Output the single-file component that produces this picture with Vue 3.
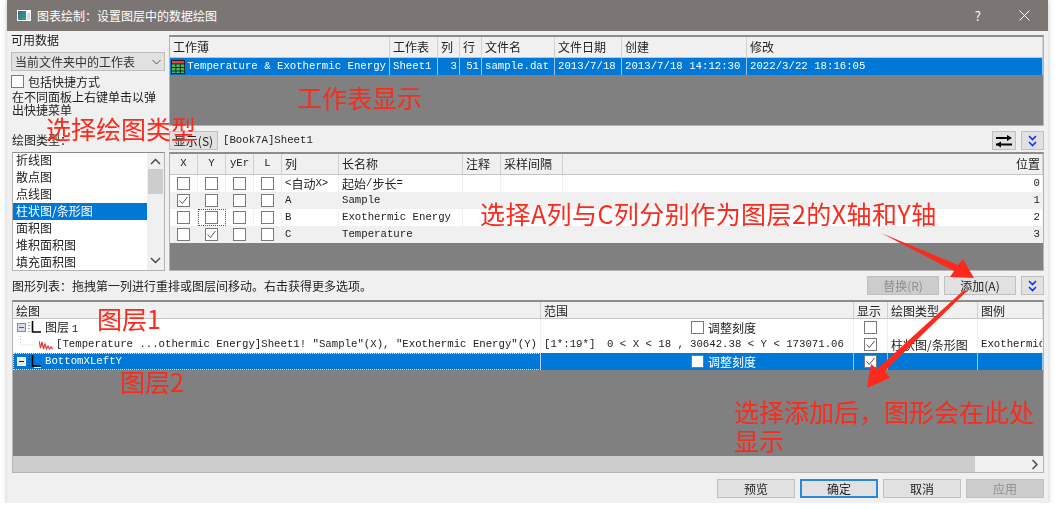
<script setup>
const sheetCols = ["工作薄", "工作表", "列", "行", "文件名", "文件日期", "创建", "修改"];
const plotTypes = ["折线图", "散点图", "点线图", "柱状图/条形图", "面积图", "堆积面积图", "填充面积图"];
const colHeads = ["X", "Y", "yEr", "L", "列", "长名称", "注释", "采样间隔"];
const colRows = [
  { x: false, y: false, name: "", long: "", pos: 0 },
  { x: true, y: false, name: "A", long: "Sample", pos: 1 },
  { x: false, y: false, name: "B", long: "Exothermic Energy", pos: 2, focus: true },
  { x: false, y: true, name: "C", long: "Temperature", pos: 3 },
];
const plotHeads = ["绘图", "范围", "显示", "绘图类型", "图例"];
</script>

<template>
  <div class="dialog">
    <header class="titlebar">
      <svg class="app-icon" width="14" height="11" viewBox="0 0 14 11">
        <defs>
          <linearGradient id="appFill" x1="0" y1="0" x2="1" y2="1">
            <stop offset="0" stop-color="#2f6f8f" />
            <stop offset="1" stop-color="#3f9f80" />
          </linearGradient>
        </defs>
        <rect width="14" height="11" fill="#fff" />
        <rect x="1" y="1" width="8" height="9" fill="url(#appFill)" />
        <rect x="10" y="3" width="3" height="7" fill="#d8dde0" />
      </svg>
      <span class="title">图表绘制：设置图层中的数据绘图</span>
      <span class="help">?</span>
      <svg class="close" width="11" height="11" viewBox="0 0 11 11">
        <path d="M0.5 0.5 10.5 10.5M10.5 0.5 0.5 10.5" stroke="#fff" stroke-width="1" fill="none" />
      </svg>
    </header>

    <div class="body">
      <div class="upper">
        <div class="left">
          <div class="label first">可用数据</div>
          <div class="select">
            <span>当前文件夹中的工作表</span>
            <svg width="9" height="6" viewBox="0 0 9 6"><path d="M0.5 1 4.5 5 8.5 1" stroke="#555" fill="none" /></svg>
          </div>
          <label class="shortcut"><span class="cb"></span>包括快捷方式</label>
          <div class="note">在不同面板上右键单击以弹出快捷菜单</div>
          <div class="label types">绘图类型：</div>
          <div class="listbox">
            <ul>
              <li v-for="(t, i) in plotTypes" :key="t" :class="{ sel: i === 3 }">{{ t }}</li>
            </ul>
            <div class="vscroll">
              <svg width="11" height="7" viewBox="0 0 11 7"><path d="M1 6 5.5 1.5 10 6" stroke="#444" stroke-width="1.4" fill="none" /></svg>
              <div class="vthumb"></div>
              <svg class="down" width="11" height="7" viewBox="0 0 11 7"><path d="M1 1 5.5 5.5 10 1" stroke="#444" stroke-width="1.4" fill="none" /></svg>
            </div>
          </div>
        </div>

        <div class="right">
          <div class="table sheets">
            <div class="row head sheet-grid">
              <div v-for="c in sheetCols" :key="c" class="cell">{{ c }}</div>
            </div>
            <div class="row sel sheet-grid">
              <div class="cell m book">
                <svg width="16" height="16" viewBox="0 0 16 16">
                  <rect width="16" height="16" fill="#111" />
                  <rect x="1" y="1" width="14" height="3" fill="#e8404a" />
                  <g fill="#3fbf5f">
                    <rect x="1" y="5" width="4" height="3" /><rect x="6" y="5" width="4" height="3" /><rect x="11" y="5" width="4" height="3" />
                    <rect x="1" y="9" width="4" height="3" /><rect x="6" y="9" width="4" height="3" /><rect x="11" y="9" width="4" height="3" />
                    <rect x="1" y="13" width="4" height="2" /><rect x="6" y="13" width="4" height="2" /><rect x="11" y="13" width="4" height="2" />
                  </g>
                </svg>
                <span>Temperature &amp; Exothermic Energy</span>
              </div>
              <div class="cell m">Sheet1</div>
              <div class="cell m end">3</div>
              <div class="cell m end">51</div>
              <div class="cell m">sample.dat</div>
              <div class="cell m">2013/7/18</div>
              <div class="cell m">2013/7/18 14:12:30</div>
              <div class="cell m">2022/3/22 18:16:05</div>
            </div>
          </div>

          <div class="toolbar">
            <button class="btn show">显示(S)</button>
            <span class="m path">[Book7A]Sheet1</span>
            <button class="btn icon swap">
              <svg width="16" height="14" viewBox="0 0 16 14">
                <path d="M0 4H12M0 10.5H4" stroke="#000" stroke-width="2" fill="none" />
                <path d="M4 10.5H16" stroke="#000" stroke-width="2" fill="none" />
                <path d="M16 4 11 1V7ZM0 10.5 5 7.5V13.5Z" fill="#000" />
              </svg>
            </button>
            <button class="btn icon">
              <svg width="9" height="12" viewBox="0 0 9 12">
                <path d="M1 1 4.5 4.5 8 1M1 7 4.5 10.5 8 7" stroke="#1a2cff" stroke-width="1.6" fill="none" />
              </svg>
            </button>
          </div>

          <div class="table columns">
            <div class="row head col-grid">
              <div v-for="(c, i) in colHeads" :key="c" class="cell" :class="{ mid: i < 4, m: i < 4 }">{{ c }}</div>
              <div class="cell end">位置</div>
            </div>
            <div v-for="(r, i) in colRows" :key="r.pos" class="row col-grid" :class="{ alt: i % 2 }">
              <div class="cell mid"><span class="cb" :class="{ on: r.x }"><svg v-if="r.x" width="11" height="11" viewBox="0 0 11 11"><path d="M1.5 5.5 4.3 8.5 9.5 2" stroke="#555" fill="none" /></svg></span></div>
              <div class="cell mid" :class="{ focus: r.focus }"><span class="cb" :class="{ on: r.y }"><svg v-if="r.y" width="11" height="11" viewBox="0 0 11 11"><path d="M1.5 5.5 4.3 8.5 9.5 2" stroke="#555" fill="none" /></svg></span></div>
              <div class="cell mid"><span class="cb"></span></div>
              <div class="cell mid"><span class="cb"></span></div>
              <template v-if="i === 0">
                <div class="cell"><span class="m">&lt;</span>自动<span class="m">X&gt;</span></div>
                <div class="cell">起始<span class="m">/</span>步长<span class="m">=</span></div>
              </template>
              <template v-else>
                <div class="cell m">{{ r.name }}</div>
                <div class="cell m">{{ r.long }}</div>
              </template>
              <div class="cell"></div>
              <div class="cell"></div>
              <div class="cell m end">{{ r.pos }}</div>
            </div>
          </div>
        </div>
      </div>

      <div class="hint">
        <span class="hint-text">图形列表：拖拽第一列进行重排或图层间移动。右击获得更多选项。</span>
        <button class="btn wide disabled">替换(R)</button>
        <button class="btn wide">添加(A)</button>
        <button class="btn icon">
          <svg width="9" height="12" viewBox="0 0 9 12">
            <path d="M1 1 4.5 4.5 8 1M1 7 4.5 10.5 8 7" stroke="#1a2cff" stroke-width="1.6" fill="none" />
          </svg>
        </button>
      </div>

      <div class="table plots">
        <div class="row head plot-grid">
          <div v-for="h in plotHeads" :key="h" class="cell">{{ h }}</div>
        </div>

        <div class="row plot-grid">
          <div class="cell tree">
            <span class="expander"></span>
            <svg class="layer" width="14" height="13" viewBox="0 0 14 13">
              <path d="M1 1V11" stroke="#555" stroke-dasharray="1 2" fill="none" />
              <path d="M4.5 0V11H13" stroke="#000" stroke-width="1.6" fill="none" />
            </svg>
            <span>图层 <span class="m">1</span></span>
          </div>
          <div class="cell scale"><span class="cb"></span>调整刻度</div>
          <div class="cell mid"><span class="cb"></span></div>
          <div class="cell"></div>
          <div class="cell"></div>
        </div>

        <div class="row plot-grid">
          <div class="cell tree child">
            <svg class="branch" width="14" height="17" viewBox="0 0 14 17">
              <path d="M0.5 0V9H14" stroke="#bbb" stroke-dasharray="1 2" fill="none" />
            </svg>
            <svg class="spark" width="14" height="10" viewBox="0 0 14 10">
              <path d="M0 1 1.5 8 3 2 4.5 9 6 4 7.5 9 9 6 10.5 9 12 7 14 9" stroke="#e8382e" stroke-width="1.2" fill="none" />
            </svg>
            <span class="m clip">[Temperature ...othermic Energy]Sheet1! "Sample"(X), "Exothermic Energy"(Y)</span>
          </div>
          <div class="cell m range">
            <span class="r1">[1*:19*]</span>
            <span class="r2">0 &lt; X &lt; 18 ,</span>
            <span>30642.38 &lt; Y &lt; 173071.06</span>
          </div>
          <div class="cell mid"><span class="cb on"><svg width="11" height="11" viewBox="0 0 11 11"><path d="M1.5 5.5 4.3 8.5 9.5 2" stroke="#555" fill="none" /></svg></span></div>
          <div class="cell">柱状图/条形图</div>
          <div class="cell m clip">Exothermic Energy</div>
        </div>

        <div class="row sel plot-grid">
          <div class="cell tree dotted">
            <span class="expander"></span>
            <svg class="layer" width="14" height="13" viewBox="0 0 14 13">
              <path d="M1 1V11" stroke="#222" stroke-dasharray="1 2" fill="none" />
              <path d="M4.5 0V11H13" stroke="#000" stroke-width="1.6" fill="none" />
              <path d="M6 12.5H13" stroke="#fff" fill="none" />
            </svg>
            <span class="m">BottomXLeftY</span>
          </div>
          <div class="cell scale"><span class="cb"></span>调整刻度</div>
          <div class="cell mid"><span class="cb on"><svg width="11" height="11" viewBox="0 0 11 11"><path d="M1.5 5.5 4.3 8.5 9.5 2" stroke="#555" fill="none" /></svg></span></div>
          <div class="cell"></div>
          <div class="cell"></div>
        </div>

        <div class="gray"></div>
        <div class="hscroll">
          <div class="hthumb"></div>
          <svg width="7" height="11" viewBox="0 0 7 11"><path d="M1.5 1 6 5.5 1.5 10" stroke="#444" stroke-width="1.4" fill="none" /></svg>
        </div>
      </div>

      <footer class="footer">
        <button class="btn foot">预览</button>
        <button class="btn foot primary">确定</button>
        <button class="btn foot">取消</button>
        <button class="btn foot disabled">应用</button>
      </footer>
    </div>
  </div>

  <!-- red notes drawn over the screenshot -->
  <div class="note-red n1">工作表显示</div>
  <div class="note-red n2">选择绘图类型</div>
  <div class="note-red n3">选择A列与C列分别作为图层2的X轴和Y轴</div>
  <div class="note-red n4">图层1</div>
  <div class="note-red n5">图层2</div>
  <div class="note-red n6">选择添加后，图形会在此处显示</div>
  <svg class="arrows" width="1055" height="509" viewBox="0 0 1055 509">
    <path d="M881 233 958 265 963 259 974 278 950 277 954 271Z" fill="#fb2a1c" />
    <path d="M967 291 885 371 890 378 867 388 871 364 877 369 964 290Z" fill="#fb2a1c" />
  </svg>
</template>

<style>
html,
body {
  margin: 0;
  background: #fff;
  overflow: hidden;
}
</style>

<style scoped>
.dialog {
  width: 1041px;
  height: 503px;
  margin-left: 7px;
  background: #f0f0f0;
  box-shadow: 0 1px 5px rgba(0, 0, 0, 0.25);
  font: 12px/17px "Noto Sans CJK SC", sans-serif;
  color: #222;
  display: flex;
  flex-direction: column;
  filter: blur(0.35px);
}

.titlebar {
  height: 31px;
  flex: none;
  background: #7b7574;
  color: #fff;
  display: flex;
  align-items: center;
  padding: 0 18px 0 10px;
}

.title {
  margin-left: 6px;
  flex: 1;
}

.help {
  font-size: 13px;
  margin-right: 38px;
}

.body {
  padding: 4px 4px 0;
  flex: 1;
  min-height: 0;
}

.upper {
  display: grid;
  grid-template-columns: 154px 875px;
  gap: 4px;
  height: 236px;
}

.left {
  display: flex;
  flex-direction: column;
  min-width: 0;
}

.first {
  line-height: 14px;
  margin-top: -2px;
}

.select {
  height: 19px;
  margin-top: 5px;
  background: #e1e1e1;
  border: 1px solid #bdbdbd;
  box-sizing: border-box;
  display: flex;
  align-items: center;
  justify-content: space-between;
  padding: 0 3px;
  color: #333;
}

.shortcut {
  display: flex;
  align-items: center;
  gap: 4px;
  margin-top: 3px;
  height: 14px;
}

.note {
  margin-top: 2px;
  padding-left: 1px;
  line-height: 13px;
  width: 150px;
}

.types {
  margin-top: auto;
  margin-bottom: 5px;
  padding-left: 1px;
  line-height: 14px;
}

.listbox {
  height: 119px;
  flex: none;
  margin-left: 1px;
  box-sizing: border-box;
  border: 1px solid #b4b4b4;
  border-top-color: #8c8c8c;
  background: #fff;
  display: flex;
  overflow: hidden;
}

.listbox ul {
  list-style: none;
  margin: -1px 0 0;
  padding: 0;
  flex: 1;
  min-width: 0;
}

.listbox li {
  height: 17px;
  padding-left: 3px;
  line-height: 16px;
}

.listbox li.sel {
  background: #0078d7;
  color: #fff;
}

.vscroll {
  width: 17px;
  background: #f0f0f0;
  display: flex;
  flex-direction: column;
  align-items: center;
  padding-top: 5px;
}

.vthumb {
  width: 15px;
  height: 25px;
  margin-top: 4px;
  background: #cdcdcd;
}

.down {
  margin-top: auto;
  margin-bottom: 6px;
}

.right {
  display: flex;
  flex-direction: column;
  min-width: 0;
}

.table {
  box-sizing: border-box;
  border: 1px solid #b4b4b4;
  border-top: 2px solid #8c8c8c;
  background: #808080;
  overflow: hidden;
}

.sheets {
  height: 91px;
}

.columns {
  height: 119px;
  margin-top: 2px;
}

.plots {
  height: 173px;
  margin: 5px 0 0 1px;
  display: flex;
  flex-direction: column;
}

.row {
  display: grid;
  height: 17px;
  background: #fff;
  flex: none;
}

.row.alt {
  background: #f0f0f0;
}

.row.head {
  height: 20px;
  background: #f0f0f0;
  border-bottom: 1px solid #c4c4c4;
}

.row.head .cell {
  padding-bottom: 2px;
}

.plots .row.head {
  height: 16px;
}

.plots .row.head .cell {
  padding-bottom: 0;
}

.row.sel {
  background: #0078d7;
  color: #fff;
}

.sheet-grid {
  grid-template-columns: 220px 48px 22px 22px 73px 67px 125px 1fr;
}

.col-grid {
  grid-template-columns: 28px 28px 28px 28px 57px 124px 38px 62px 1fr;
}

.plot-grid {
  grid-template-columns: 528px 313px 34px 90px 1fr;
}

.cell {
  min-width: 0;
  padding: 0 3px;
  white-space: nowrap;
  overflow: hidden;
  display: flex;
  align-items: center;
  border-right: 1px solid #d0d0d0;
}

.sel .cell {
  border-right-color: #9fc6ea;
}

.row:not(.head):not(.sel) .cell {
  border-right-color: #f0f0f0;
}

.m {
  font-family: "Liberation Mono", "Noto Sans CJK SC", monospace;
  font-size: 10.7px;
}

.mid {
  justify-content: center;
  padding: 0;
}

.end {
  justify-content: flex-end;
  padding: 0 2px;
}

.book {
  gap: 2px;
  padding-left: 1px;
}

.cb {
  width: 13px;
  height: 13px;
  flex: none;
  box-sizing: border-box;
  background: #fff;
  border: 1px solid #7a7a7a;
  display: inline-flex;
  align-items: center;
  justify-content: center;
}

.focus {
  outline: 1px dotted #555;
  outline-offset: -1px;
}

.toolbar {
  height: 19px;
  margin-top: 5px;
  display: flex;
  align-items: center;
}

.path {
  margin-left: 5px;
  flex: 1;
}

.btn {
  height: 19px;
  padding: 0;
  box-sizing: border-box;
  background: #e1e1e1;
  border: 1px solid #c0c0c0;
  font: 12px/16px "Noto Sans CJK SC", sans-serif;
  color: #222;
  display: inline-flex;
  align-items: center;
  justify-content: center;
}

.show {
  width: 49px;
}

.icon {
  width: 23px;
}

.swap {
  margin-right: 5px;
  width: 24px;
}

.hint {
  height: 19px;
  margin-top: 5px;
  display: flex;
  align-items: center;
  gap: 5px;
}

.hint-text {
  flex: 1;
  padding-left: 1px;
}

.wide {
  width: 72px;
}

.disabled {
  background: #ccc;
  color: #8f8f8f;
}

.tree {
  padding-left: 4px;
  gap: 2px;
}

.expander {
  width: 9px;
  height: 9px;
  flex: none;
  box-sizing: border-box;
  border: 1px solid #7f8aa8;
  background: linear-gradient(#4a5a8c, #4a5a8c) center / 5px 1px no-repeat, #d8dce8;
}

.sel .expander {
  background: linear-gradient(#222, #222) center / 5px 1px no-repeat, #e8e8e8;
  border-color: #fff;
}

.layer {
  margin-right: 1px;
}

.child {
  padding-left: 7px;
  gap: 0;
}

.spark {
  margin: 0 3px 0 5px;
  flex: none;
}

.clip {
  overflow: hidden;
}

.dotted {
  outline: 1px dotted #cfe4f7;
  outline-offset: -1px;
}

.scale {
  padding-left: 150px;
  gap: 4px;
}

.range {
  padding-left: 3px;
}

.r1 {
  width: 63px;
  flex: none;
}

.r2 {
  width: 83px;
  flex: none;
}

.gray {
  flex: 1;
  background: #808080;
}

.hscroll {
  height: 16px;
  flex: none;
  background: #f0f0f0;
  display: flex;
  align-items: center;
  justify-content: space-between;
  padding-right: 5px;
}

.hthumb {
  width: 962px;
  height: 100%;
  background: #cdcdcd;
}

.footer {
  margin-top: 6px;
  display: flex;
  justify-content: flex-end;
  gap: 5px;
}

.foot {
  width: 78px;
}

.primary {
  border: 2px solid #2b88d8;
}

.note-red {
  position: absolute;
  font: 25px/30px "Noto Sans CJK SC", sans-serif;
  color: #fb2a1c;
  white-space: nowrap;
}

.n1 {
  left: 297px;
  top: 82px;
}

.n2 {
  left: 46px;
  top: 113px;
}

.n3 {
  left: 480px;
  top: 198px;
  letter-spacing: 0.45px;
}

.n4 {
  left: 97px;
  top: 303px;
}

.n5 {
  left: 120px;
  top: 366px;
}

.n6 {
  left: 734px;
  top: 397px;
  width: 302px;
  white-space: normal;
  line-height: 29px;
}

.arrows {
  position: absolute;
  left: 0;
  top: 0;
  pointer-events: none;
}
</style>
